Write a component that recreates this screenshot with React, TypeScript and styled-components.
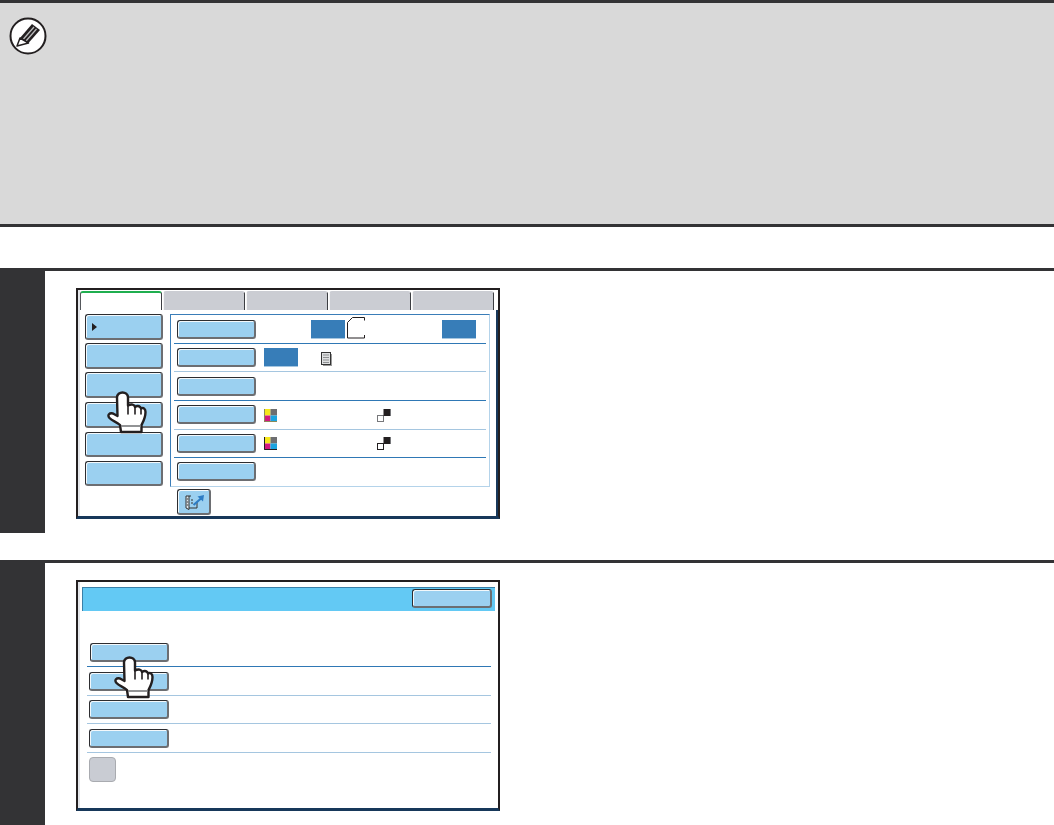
import React from "react"
import styled, { createGlobalStyle } from "styled-components"

const GlobalStyles = createGlobalStyle`
  html, body {
    margin: 0;
    padding: 0;
    background: #fff;
    font-family: "Liberation Sans", Arial, sans-serif;
  }
`

const Page = styled.div`
  width: 1054px;
  height: 825px;
  overflow: hidden;
  display: flex;
  flex-direction: column;
`

const NoteBox = styled.section`
  box-sizing: border-box;
  height: 227px;
  flex: none;
  padding: 13px 0 0 8px;
  background: #d9d9d9;
  border-top: 3px solid #333335;
  border-bottom: 3px solid #333335;
`

const Step = styled.section<{ $top: number }>`
  box-sizing: border-box;
  flex: none;
  height: 265px;
  margin-top: ${(p) => p.$top}px;
  display: flex;
  border-top: 3px solid #333335;
`

const Rail = styled.div`
  width: 45px;
  flex: none;
  background: #333335;
`

const StepBody = styled.div`
  padding: 17px 0 0 31px;
`

const Screen = styled.div<{ $deepEdge?: boolean }>`
  position: relative;
  box-sizing: border-box;
  width: 424px;
  height: 231px;
  background: #fff;
  border-top: 2px solid #231f20;
  border-left: 2px solid #231f20;
  border-right: 2px solid #231f20;
  border-bottom: 3px solid #17385a;
  box-shadow: inset 2px 0 0 #e4e6ea;

  &::after {
    content: "";
    display: ${(p) => (p.$deepEdge ? "block" : "none")};
    position: absolute;
    top: 20px;
    bottom: 0;
    right: 0;
    width: 2px;
    background: #17385a;
  }
`

const Tabs = styled.div`
  display: flex;
  gap: 1px;
  padding: 1px 0 0 2px;
  height: 20px;
  box-sizing: border-box;
`

const Tab = styled.div<{ $active?: boolean }>`
  box-sizing: border-box;
  width: 82px;
  background: ${(p) => (p.$active ? "#fff" : "#cbcdd3")};
  border-top: 2px solid ${(p) => (p.$active ? "#1fae4f" : "#cbcdd3")};
  border-left: 1px solid ${(p) => (p.$active ? "#55585c" : "#f4f4f5")};
  border-right: 1px solid #3c3e42;
  border-radius: 3px 3px 0 0;
`

const ScreenBody = styled.div`
  display: flex;
  gap: 7px;
  padding: 4px 0 0 7px;
`

const SideMenu = styled.div`
  width: 78px;
  display: flex;
  flex-direction: column;
  gap: 3px;
`

const MenuButton = styled.div`
  box-sizing: border-box;
  height: 26px;
  display: flex;
  align-items: center;
  padding-left: 6px;
  background: #9bd0f0;
  border: 1px solid #2d2d30;
  border-right: 2px solid #6c6e72;
  border-bottom: 2px solid #6c6e72;
  border-radius: 3px;
  box-shadow: inset 1px 1px 0 #f3f8fb;

  &:nth-child(n + 4) {
    margin-top: 1px;
  }
  &:nth-child(n + 5) {
    height: 25px;
  }
`

const Caret = styled.span`
  width: 0;
  height: 0;
  border-left: 5px solid #231f20;
  border-top: 4.5px solid transparent;
  border-bottom: 4.5px solid transparent;
`

const SettingsColumn = styled.div`
  display: flex;
  flex-direction: column;
`

const Panel = styled.div`
  box-sizing: border-box;
  width: 320px;
  height: 173px;
  padding: 0 3px;
  border: 1px solid #b4d3ea;
  border-left-color: #3a7db8;
  border-top-color: #3a7db8;
`

const Row = styled.div<{ $rule?: "dark" | "light"; $height?: number; $pad?: number; $inset?: number }>`
  box-sizing: border-box;
  height: ${(p) => p.$height ?? 29}px;
  display: flex;
  align-items: flex-start;
  padding: ${(p) => p.$pad ?? 4}px 0 0 ${(p) => p.$inset ?? 3}px;
  border-bottom: ${(p) =>
    p.$rule === "dark"
      ? "1px solid #2f78b5"
      : p.$rule === "light"
        ? "1px solid #a5c6e0"
        : "0"};
`

const KeyButton = styled.div<{ $width?: number }>`
  box-sizing: border-box;
  flex: none;
  width: ${(p) => p.$width ?? 79}px;
  height: 19px;
  background: #9bd0f0;
  border: 1px solid #2d2d30;
  border-right: 2px solid #6c6e72;
  border-bottom: 2px solid #6c6e72;
  border-radius: 3px;
  box-shadow: inset 1px 1px 0 #f3f8fb;
`

const ValueChip = styled.div<{ $left: number }>`
  flex: none;
  width: 34px;
  height: 18px;
  margin-left: ${(p) => p.$left}px;
  background: #377db8;
  box-shadow: 0 1px 0 #a5c6e0;
`

const Glyph = styled.svg<{ $left: number; $top?: number }>`
  flex: none;
  display: block;
  margin-left: ${(p) => p.$left}px;
  margin-top: ${(p) => p.$top ?? 0}px;
`

const ShortcutButton = styled.div`
  box-sizing: border-box;
  width: 34px;
  height: 26px;
  margin: 2px 0 0 7px;
  display: flex;
  align-items: center;
  justify-content: center;
  background: #9bd0f0;
  border: 1px solid #2d2d30;
  border-right: 2px solid #6c6e72;
  border-bottom: 2px solid #6c6e72;
  border-radius: 3px;
  box-shadow: inset 1px 1px 0 #f3f8fb;
`

const TitleBar = styled.div`
  box-sizing: border-box;
  height: 24px;
  margin: 5px 3px 0 4px;
  display: flex;
  justify-content: flex-end;
  padding: 1px 3px 0 0;
  background: #63c9f4;
  border-top: 1px solid #3a80a8;
  border-left: 1px solid #3a80a8;
`

const OptionList = styled.div`
  margin: 27px 7px 0 9px;
  display: flex;
  flex-direction: column;
`

const GrayKey = styled.div`
  box-sizing: border-box;
  width: 27px;
  height: 25px;
  background: #c9ccd3;
  border: 1px solid #a9abb0;
  border-radius: 4px;
`

const HandSpot = styled.div<{ $x: number; $y: number }>`
  position: absolute;
  left: ${(p) => p.$x}px;
  top: ${(p) => p.$y}px;
`

function PencilBadge() {
  return (
    <svg width="40" height="40" viewBox="0 0 40 40">
      <circle cx="20" cy="20" r="17.5" fill="#fff" stroke="#231f20" strokeWidth="2" />
      <polygon points="12,22 24,8 32,14 20.5,27" fill="#231f20" />
      <path d="M15.5 23 L26 11 M18 25 L28.5 13" stroke="#b9babb" strokeWidth="1.3" />
      <polygon points="12,22 20.5,27 9,30" fill="#fff" stroke="#231f20" strokeWidth="1.5" strokeLinejoin="round" />
    </svg>
  )
}

function Hand() {
  return (
    <svg width="40" height="44" viewBox="0 0 40 44">
      <path
        d="M14 42 L13 35 C10 32 5 31 2.5 28 C0 25 2.5 22.5 6 23.5 L10.5 26 L10 7.5 C10 0.8 21 0.8 21 7.5 L21 15.5 C24.5 13.5 27.5 14.5 28 17 C31 15 33.5 16.5 34 18.5 C36.5 17 38.5 19 38.5 22 C38.5 28 36 32 34.5 35 L34.5 42 Z"
        fill="#fff"
        stroke="#231f20"
        strokeWidth="2.4"
        strokeLinejoin="round"
      />
      <path d="M21 15.5 L21 24 M28 17 L28 24 M34 18.5 L34 24" fill="none" stroke="#231f20" strokeWidth="1.6" strokeLinecap="round" />
      <path d="M14 36 L34 36" stroke="#77787b" strokeWidth="1.6" />
    </svg>
  )
}

function PageOutline() {
  return (
    <Glyph $left={2} $top={-3} width="18" height="22" viewBox="0 0 18 22">
      <path
        d="M17.5 3.5 L17.5 0.5 L5.5 0.5 L0.5 5.5 L0.5 21 L17.5 21 L17.5 18"
        fill="none"
        stroke="#231f20"
        strokeWidth="1"
      />
    </Glyph>
  )
}

function DocIcon() {
  return (
    <Glyph $left={23} $top={4} width="11" height="14" viewBox="0 0 11 14">
      <rect x="0.5" y="0.5" width="9" height="12" fill="#dfe0e1" stroke="#333" />
      <rect x="10" y="2" width="1" height="12" fill="#9a9a9a" />
      <rect x="2" y="13" width="9" height="1" fill="#9a9a9a" />
      <path d="M2 3 H8 M2 5.5 H8 M2 8 H8 M2 10.5 H8" stroke="#8d8f91" strokeWidth="1" />
    </Glyph>
  )
}

function ColourIcon({ outlined, top }: { outlined?: boolean; top: number }) {
  return (
    <Glyph $left={8} $top={top} width="13" height="13" viewBox="0 0 13 13">
      <rect x="0" y="0" width="6.5" height="6.5" fill="#f5e61c" />
      <rect x="6.5" y="0" width="6.5" height="6.5" fill="#6d6e71" />
      <rect x="0" y="6.5" width="6.5" height="6.5" fill="#d3177f" />
      <rect x="6.5" y="6.5" width="6.5" height="6.5" fill="#1ba4e0" />
      <path d="M0.5 0 V12.5 H13" fill="none" stroke={outlined ? "#231f20" : "#8a8a5a"} strokeWidth="1" />
    </Glyph>
  )
}

function MonoIcon({ dark, top }: { dark?: boolean; top: number }) {
  return (
    <Glyph $left={100} $top={top} width="14" height="13" viewBox="0 0 14 13">
      <rect x="0.5" y="6.5" width="6" height="6" fill="#fff" stroke={dark ? "#231f20" : "#77787b"} />
      <rect x="6.5" y="0" width="7" height="7" fill="#231f20" />
      <rect x="13" y="0" width="1" height="7" fill="#77787b" />
    </Glyph>
  )
}

function BookArrow() {
  return (
    <svg width="24" height="18" viewBox="0 0 24 18">
      <path d="M4 3 L4 15 L7 16.5 L7 3 Z" fill="#dfe9f0" stroke="#333" strokeWidth="1" strokeLinejoin="round" />
      <path d="M7 3 L9 3 M7 15 L15 15 L15 9" fill="none" stroke="#333" strokeWidth="1" />
      <path d="M4.8 6 H6.2 M4.8 9 H6.2 M4.8 12 H6.2 M9 7 H11 M9 10 H11" stroke="#333" strokeWidth="1" />
      <path d="M11.5 12 L19 5.5" stroke="#2d7cc4" strokeWidth="2.2" />
      <polygon points="15.5,3.5 22,2 21,8.5" fill="#2d7cc4" />
    </svg>
  )
}

function App() {
  return (
    <>
      <GlobalStyles />
      <Page>
        <NoteBox>
          <PencilBadge />
        </NoteBox>

        <Step $top={41}>
          <Rail />
          <StepBody>
            <Screen $deepEdge>
              <Tabs>
                <Tab $active />
                <Tab />
                <Tab />
                <Tab />
                <Tab />
              </Tabs>
              <ScreenBody>
                <SideMenu>
                  <MenuButton>
                    <Caret />
                  </MenuButton>
                  <MenuButton />
                  <MenuButton />
                  <MenuButton />
                  <MenuButton />
                  <MenuButton />
                </SideMenu>
                <SettingsColumn>
                  <Panel>
                    <Row $rule="dark" $pad={5}>
                      <KeyButton />
                      <ValueChip $left={55} />
                      <PageOutline />
                      <ValueChip $left={77} />
                    </Row>
                    <Row $rule="light" $height={28}>
                      <KeyButton />
                      <ValueChip $left={8} />
                      <DocIcon />
                    </Row>
                    <Row $rule="dark" $pad={5}>
                      <KeyButton />
                    </Row>
                    <Row $rule="light">
                      <KeyButton />
                      <ColourIcon top={4} />
                      <MonoIcon top={4} />
                    </Row>
                    <Row $rule="dark" $height={28}>
                      <KeyButton />
                      <ColourIcon outlined top={3} />
                      <MonoIcon dark top={3} />
                    </Row>
                    <Row>
                      <KeyButton />
                    </Row>
                  </Panel>
                  <ShortcutButton>
                    <BookArrow />
                  </ShortcutButton>
                </SettingsColumn>
              </ScreenBody>
              <HandSpot $x={29} $y={100}>
                <Hand />
              </HandSpot>
            </Screen>
          </StepBody>
        </Step>

        <Step $top={27}>
          <Rail />
          <StepBody>
            <Screen>
              <TitleBar>
                <KeyButton $width={80} />
              </TitleBar>
              <OptionList>
                <Row $rule="dark" $pad={5}>
                  <KeyButton />
                </Row>
                <Row $rule="light" $pad={5} $inset={2}>
                  <KeyButton $width={80} />
                </Row>
                <Row $rule="light" $height={28} $inset={2}>
                  <KeyButton $width={80} />
                </Row>
                <Row $rule="light" $pad={5} $inset={2}>
                  <KeyButton $width={80} />
                </Row>
                <Row $inset={2}>
                  <GrayKey />
                </Row>
              </OptionList>
              <HandSpot $x={36} $y={73}>
                <Hand />
              </HandSpot>
            </Screen>
          </StepBody>
        </Step>
      </Page>
    </>
  )
}

export default App
